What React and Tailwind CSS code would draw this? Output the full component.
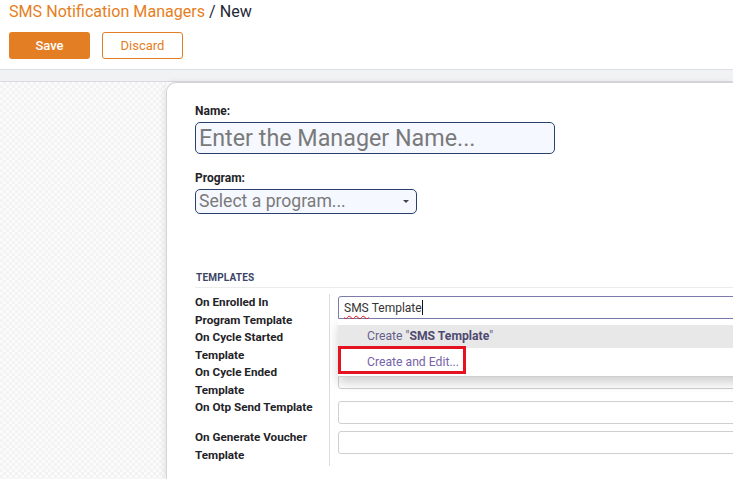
import React from 'react'

const rows = [
  { label: ['On Enrolled In', 'Program Template'], h: 'h-[35px]' },
  { label: ['On Cycle Started', 'Template'], h: 'h-[35px]' },
  { label: ['On Cycle Ended', 'Template'], h: 'h-[35px]' },
  { label: ['On Otp Send Template'], h: 'h-[30px]' },
  { label: ['On Generate Voucher', 'Template'], h: 'h-[37px]' },
]

function Dropdown() {
  return (
    <div className="absolute left-[8px] top-[25px] w-[560px] z-10 bg-white border-b border-[#cfcfcf] shadow-[0_6px_10px_rgba(0,0,0,0.18)] pt-[6px]">
      <div className="h-[23px] bg-[#e8e8e8] pl-[29px] flex items-center text-[12.2px] text-[#65608a]">
        Create "<span className="font-bold text-[#4f4a72]">SMS Template</span>"
      </div>
      <div className="relative h-[28px] pl-[29px] flex items-center text-[12.2px] text-[#7663a8]">
        Create and Edit...
        <div className="absolute left-0 top-[-2px] w-[128px] h-[28px] border-[3px] border-[#e3141f]" />
      </div>
    </div>
  )
}

export default function App() {
  return (
    <div className="h-[479px] w-full overflow-hidden bg-white font-['Roboto',sans-serif] flex flex-col">
      {/* control panel */}
      <div className="px-[9px] pt-[1px] pb-[10px]">
        <div className="text-[16.1px] leading-[22px]">
          <span className="text-[#e67e22]">SMS Notification Managers</span>
          <span className="text-[#1f2937]"> / New</span>
        </div>
        <div className="flex gap-[12px] mt-[9px]">
          <button className="w-[81px] h-[27px] rounded-[3px] bg-[#e47e24] text-white text-[13px] font-medium">Save</button>
          <button className="w-[81px] h-[27px] rounded-[3px] bg-white border border-[#e47e24] text-[#e47e24] text-[13px]">Discard</button>
        </div>
      </div>
      <div className="h-[13px] shrink-0 border-t border-[#dedfe2] border-b border-b-[#d9dadd] bg-[#f1f2f4]" />

      <div className="flex flex-1 min-h-0">
        <div className="w-[166px] shrink-0 bg-[repeating-conic-gradient(#f3f3f3_0_25%,#fbfbfb_0_50%)] bg-[length:6px_6px]" />
        <div className="flex-1 min-w-0 bg-white border-l border-t border-[#d4d4d8] rounded-tl-[10px] shadow-[-2px_0_6px_rgba(0,0,0,0.08)] pl-[28px] pt-[20px] overflow-hidden">
          <div className="text-[12px] leading-[16px] font-bold text-[#1f2328]">Name:</div>
          <div className="mt-[3px] w-[360px] h-[32px] rounded-[5px] border-[1.5px] border-[#2a4170] bg-[#f5f8fe] flex items-center pl-[3px] text-[23.3px] text-[#7a7a7a]">
            Enter the Manager Name...
          </div>

          <div className="mt-[16px] text-[12px] leading-[16px] font-bold text-[#1f2328]">Program:</div>
          <div className="mt-[3px] w-[222px] h-[25px] rounded-[5px] border-[1.5px] border-[#2a4170] bg-[#f5f8fe] flex items-center justify-between pl-[3px] pr-[7px] text-[17.6px] text-[#7a7a7a]">
            <span>Select a program...</span>
            <span className="w-0 h-0 border-l-[3px] border-r-[3px] border-t-[3px] border-l-transparent border-r-transparent border-t-[#444]" />
          </div>

          <div className="mt-[57px] w-[600px] border-b border-[#ececec] pb-[2px] pl-[1px] text-[10px] leading-[14px] font-bold tracking-[0.2px] text-[#3c4566]">
            TEMPLATES
          </div>

          <div className="mt-[6px] grid grid-cols-[134px_560px]">
            {rows.map((row, i) => (
              <React.Fragment key={i}>
                <div className={`${row.h} text-[11.7px] leading-[17.5px] font-bold text-[#1f2328]`}>
                  {row.label.map((l) => (
                    <div key={l}>{l}</div>
                  ))}
                </div>
                <div className={`${row.h} relative border-l border-[#dcdcdc] pl-[8px] pt-[2px]`}>
                  {i === 0 ? (
                    <>
                      <div className="h-[23px] border border-[#7d7bab] rounded-tl-[3px] bg-white flex items-center pl-[5px] text-[12px] text-[#333]">
                        <span className="underline decoration-wavy decoration-[#e3141f] decoration-1 underline-offset-[3px]">SMS</span>
                        <span>&nbsp;Template</span>
                        <span className="w-px h-[15px] bg-[#111]" />
                      </div>
                      <Dropdown />
                    </>
                  ) : (
                    <div className="h-[23px] border border-[#cfcfcf] rounded-[3px] bg-white" />
                  )}
                </div>
              </React.Fragment>
            ))}
          </div>
        </div>
      </div>
    </div>
  )
}
